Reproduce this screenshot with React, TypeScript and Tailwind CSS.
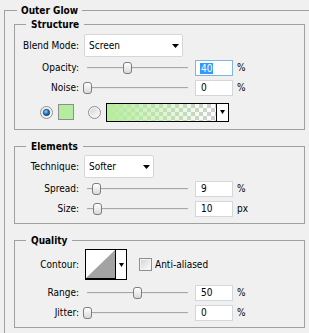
import React from "react";

const Arrow = ({ w = 7 }: { w?: number }) => (
  <svg width={w} height={4} viewBox={`0 0 ${w} 4`} className="block">
    <polygon points={`0,0 ${w},0 ${w / 2},4`} fill="#000" />
  </svg>
);

function Dropdown({ value, width }: { value: string; width: string }) {
  return (
    <div
      className={`${width} ml-[5px] flex h-[23px] items-center justify-between rounded-[2px] border border-[#d6d6d6] bg-white pl-[4px] pr-[3px]`}
    >
      <span>{value}</span>
      <Arrow />
    </div>
  );
}

function Slider({ value }: { value: number }) {
  return (
    <div className="relative ml-[4px] flex h-[16px] w-[109px] items-center">
      <div className="mx-[4px] flex h-[2px] flex-1 flex-col">
        <div className="h-px bg-[#a8a8a8]" />
        <div className="h-px bg-[#e6e6e6]" />
      </div>
      <div
        className="absolute top-[2px] h-[12px] w-[9px] rounded-[3px] border border-[#7d7d7d] bg-[linear-gradient(#ffffff,#d9d9d9)]"
        style={{ left: `${4 + value - 4.5}px` }}
      />
    </div>
  );
}

function Row({
  label,
  value,
  unit,
  slider,
  focused,
  className = "",
}: {
  label: string;
  value: string;
  unit: string;
  slider: number;
  focused?: boolean;
  className?: string;
}) {
  return (
    <div className={`flex h-[16px] items-center ${className}`}>
      <div className="w-[64px] text-right">{label}</div>
      <Slider value={slider} />
      <div
        className={`ml-[3px] flex h-[16px] w-[38px] items-center border bg-white pl-[4px] ${
          focused ? "border-[#7eb4ea]" : "border-[#d3d6da]"
        }`}
      >
        {focused ? (
          <span className="bg-[#3399ff] px-[1px] leading-[11px] text-white">{value}</span>
        ) : (
          <span className="pl-[1px]">{value}</span>
        )}
      </div>
      <span className="ml-[4px]">{unit}</span>
    </div>
  );
}

function Radio({ checked }: { checked?: boolean }) {
  return (
    <svg width="13" height="13" viewBox="0 0 13 13" className="block">
      <defs>
        <linearGradient id={checked ? "rg1" : "rg2"} x1="0" y1="0" x2="1" y2="1">
          <stop offset="0" stopColor="#d4d4d4" />
          <stop offset="1" stopColor="#fbfbfb" />
        </linearGradient>
        <radialGradient id="dot" cx="0.4" cy="0.35" r="0.7">
          <stop offset="0" stopColor="#8fd0ff" />
          <stop offset="0.6" stopColor="#1a6fb8" />
          <stop offset="1" stopColor="#0b3d6e" />
        </radialGradient>
      </defs>
      <circle cx="6.5" cy="6.5" r="6" fill="#f4f4f4" stroke="#8e8f8f" />
      <circle cx="6.5" cy="6.5" r="4.3" fill={`url(#${checked ? "rg1" : "rg2"})`} />
      {checked && <circle cx="6.5" cy="6.5" r="3.2" fill="url(#dot)" stroke="#133f66" strokeWidth="0.6" />}
    </svg>
  );
}

function Fieldset({
  title,
  className = "",
  children,
}: {
  title: string;
  className?: string;
  children: React.ReactNode;
}) {
  return (
    <fieldset className={`ml-[9px] w-[291px] border border-[#a0a0a0] ${className}`}>
      <legend className="ml-[11px] px-[5px] font-bold leading-[13px]">{title}</legend>
      {children}
    </fieldset>
  );
}

export default function App() {
  return (
    <div className="h-[333px] w-[309px] overflow-hidden bg-[#f0f0f0] pl-[4px] pt-[4px] font-['DejaVu_Sans_Condensed','DejaVu_Sans',sans-serif] text-[10px] leading-[12px] text-black">
      <fieldset className="h-[340px] w-[305px] border-l border-t border-[#a0a0a0]">
        <legend className="ml-[12px] px-[4px] font-bold leading-[13px]">Outer Glow</legend>

        <Fieldset title="Structure" className="mt-[1px]">
          <div className="flex flex-col pb-[8px] pt-[3px]">
            <div className="flex h-[23px] items-center">
              <div className="w-[64px] text-right">Blend Mode:</div>
              <Dropdown value="Screen" width="w-[99px]" />
            </div>
            <Row label="Opacity:" value="40" unit="%" slider={40} focused className="mt-[3px]" />
            <Row label="Noise:" value="0" unit="%" slider={0} className="mt-[4px]" />
            <div className="mt-[7px] flex h-[18px] items-center pl-[25px]">
              <Radio checked />
              <div className="ml-[5px] h-[16px] w-[16px] border border-[#8e8e8e] bg-[#b6ec9d]" />
              <div className="ml-[14px]">
                <Radio />
              </div>
              <div className="ml-[5px] flex h-[19px] w-[123px] border border-black">
                <div className="flex-1 bg-[linear-gradient(to_right,#b6ec9d,rgba(182,236,157,0)),repeating-conic-gradient(#cfcfcf_0_25%,#ffffff_0_50%)] [background-size:100%_100%,8px_8px]" />
                <div className="flex w-[12px] items-center justify-center border-l border-black bg-white">
                  <Arrow w={5} />
                </div>
              </div>
            </div>
          </div>
        </Fieldset>

        <Fieldset title="Elements" className="mt-[10px]">
          <div className="flex flex-col pb-[6px] pt-[2px]">
            <div className="flex h-[23px] items-center">
              <div className="w-[64px] text-right">Technique:</div>
              <Dropdown value="Softer" width="w-[70px]" />
            </div>
            <Row label="Spread:" value="9" unit="%" slider={9} className="mt-[3px]" />
            <Row label="Size:" value="10" unit="px" slider={10} className="mt-[4px]" />
          </div>
        </Fieldset>

        <Fieldset title="Quality" className="mt-[10px]">
          <div className="flex flex-col pb-[6px] pt-[2px]">
            <div className="flex h-[31px] items-center">
              <div className="w-[64px] text-right">Contour:</div>
              <div className="ml-[6px] flex h-[31px] w-[42px] border border-black bg-white">
                <div className="flex-1 border-b border-black">
                  <svg width="29" height="28" viewBox="0 0 29 28" className="block">
                    <polygon points="0,28 29,0 29,28" fill="#a3a3a3" />
                  </svg>
                </div>
                <div className="flex w-[11px] items-center justify-center border-l border-black">
                  <Arrow w={5} />
                </div>
              </div>
              <div className="ml-[12px] flex h-[13px] w-[13px] items-center justify-center border border-[#8e8f8f] bg-[#f4f4f4]">
                <div className="h-[9px] w-[9px] bg-[linear-gradient(135deg,#d6d6d6,#fbfbfb)]" />
              </div>
              <span className="ml-[3px]">Anti-aliased</span>
            </div>
            <Row label="Range:" value="50" unit="%" slider={50} className="mt-[5px]" />
            <Row label="Jitter:" value="0" unit="%" slider={0} className="mt-[4px]" />
          </div>
        </Fieldset>
      </fieldset>
    </div>
  );
}
